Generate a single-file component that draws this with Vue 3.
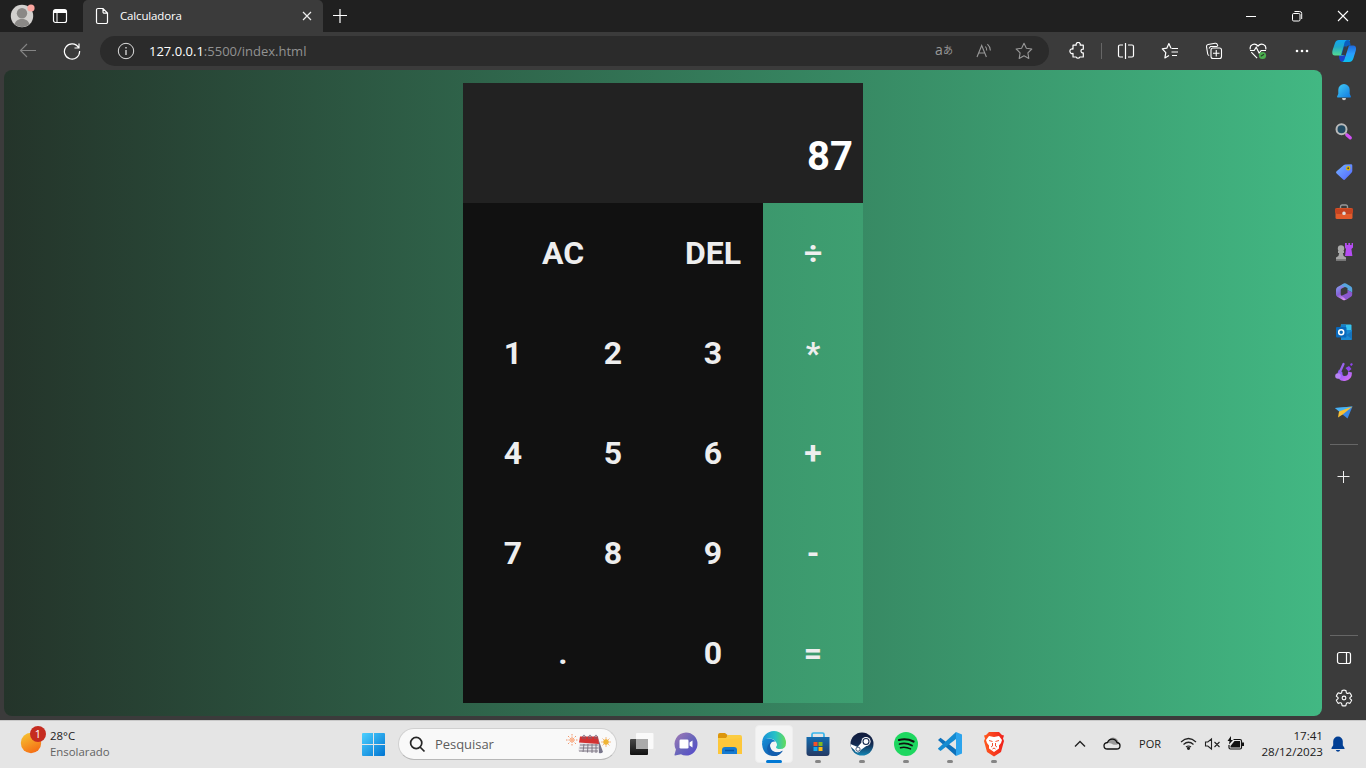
<script setup>
const keys = [
  { label: 'AC', wide: true }, { label: 'DEL' }, { label: '÷', op: true },
  { label: '1' }, { label: '2' }, { label: '3' }, { label: '*', op: true },
  { label: '4' }, { label: '5' }, { label: '6' }, { label: '+', op: true },
  { label: '7' }, { label: '8' }, { label: '9' }, { label: '-', op: true },
  { label: '.', wide: true }, { label: '0' }, { label: '=', op: true },
]
</script>

<template>
  <div class="screen">
    <header class="titlebar">
      <div class="cell avatar">
        <svg width="28" height="28" viewBox="0 0 28 28">
          <circle cx="14" cy="14" r="11.2" fill="#d2d0ce" />
          <circle cx="14" cy="11.2" r="5.2" fill="#8a8886" />
          <path d="M6.500 22.300c1-3.700 4-5.300 7.500-5.300s6.500 1.600 7.500 5.300a11.200 11.200 0 0 1-15 0z" fill="#8a8886" />
          <circle cx="23" cy="6" r="3.600" fill="#fca6a0" />
        </svg>
      </div>
      <div class="cell workspace">
        <svg width="16" height="16" viewBox="0 0 16 16" fill="none" stroke="#fff">
          <rect x="1.500" y="1.700" width="13" height="12.800" rx="2" stroke-width="1.200" />
          <path d="M1.500 4h13M2 2.800h12" stroke-width="1.800" /><path d="M5 4v10" />
        </svg>
      </div>
      <div class="tab">
        <svg class="file" width="14" height="18" viewBox="0 0 14 18" fill="none" stroke="#fff" stroke-width="1.200">
          <path d="M3 1.500h5l4.500 4.500v9a1.500 1.500 0 0 1-1.500 1.500H3A1.500 1.500 0 0 1 1.500 15V3A1.500 1.500 0 0 1 3 1.500zM8 1.500V5a1.200 1.200 0 0 0 1.200 1.200h3.300" />
        </svg>
        <span class="tab-title">Calculadora</span>
        <svg width="10" height="10" viewBox="0 0 10 10" stroke="#eee" stroke-width="1.200"><path d="M1 1l8 8M9 1L1 9" /></svg>
      </div>
      <div class="cell newtab"><svg width="16" height="16" viewBox="0 0 16 16" stroke="#fff" stroke-width="1.200"><path d="M8 1v14M1 7.500h14" /></svg></div>
      <div class="window-buttons">
        <div class="cell"><svg width="12" height="12" viewBox="0 0 12 12" stroke="#fff"><path d="M1 6.500h10" /></svg></div>
        <div class="cell"><svg width="12" height="12" viewBox="0 0 12 12" fill="none" stroke="#fff"><rect x="1.500" y="3.500" width="7.500" height="7.500" rx="1.200" /><path d="M3.500 1.500h5.200a2 2 0 0 1 2 2V9" /></svg></div>
        <div class="cell"><svg width="12" height="12" viewBox="0 0 12 12" stroke="#fff" stroke-width="1.100"><path d="M1 1l10 10M11 1L1 11" /></svg></div>
      </div>
    </header>

    <div class="toolbar">
      <div class="cell nav back"><svg width="18" height="18" viewBox="0 0 18 18" fill="none" stroke="#858585" stroke-width="1.100"><path d="M17 8.500H1.500M8 2L1.500 8.500 8 15" /></svg></div>
      <div class="cell nav"><svg width="18" height="18" viewBox="0 0 18 18" fill="none" stroke="#fff" stroke-width="1.200"><path d="M15.500 5.500A7.600 7.600 0 1 0 16.600 9M16 1.500v4.500h-4.500" /></svg></div>
      <div class="address">
        <svg class="info" width="18" height="18" viewBox="0 0 18 18" fill="none" stroke="#dedede"><circle cx="9" cy="9" r="7.700" /><path d="M9 8v5M9 5v1.400" stroke-width="1.300" /></svg>
        <span class="url"><b>127.0.0.1</b>:5500/index.html</span>
        <span class="cell tool translate">a<small>あ</small></span>
        <div class="cell tool"><svg width="18" height="18" viewBox="0 0 18 18" fill="none" stroke="#989898" stroke-width="1.100"><path d="M2 15L6.700 3.500 11.400 15M3.700 11h6M10.400 4.500q1.500 1.800 1.300 4M12.400 2.200q3 2.700 3 6.300" /></svg></div>
        <div class="cell tool"><svg width="18" height="18" viewBox="0 0 18 18" fill="none" stroke="#989898" stroke-width="1.100" stroke-linejoin="round"><path d="M9 1.200l2.400 5 5.400.8-3.900 3.900.9 5.500L9 13.800l-4.800 2.600.9-5.500L1.200 7l5.400-.8z" /></svg></div>
      </div>
      <div class="cell action extension">
        <svg width="18" height="18" viewBox="0 0 18 18" fill="none" stroke="#fff" stroke-width="1.200" stroke-linejoin="round"><path d="M5 3.200h3.200a2.100 2.100 0 1 1 4 0h3.100v4a1.900 1.900 0 1 0 0 3.700V15h-3.400a2.100 2.100 0 0 1-3.800 0H5v-3.600a2.300 2.300 0 1 1 0-4.300z" /></svg>
      </div>
      <i class="divider"></i>
      <div class="cell action"><svg width="18" height="18" viewBox="0 0 18 18" fill="none" stroke="#fff" stroke-width="1.200"><path d="M6 3H3a1.500 1.500 0 0 0-1.500 1.500v9A1.500 1.500 0 0 0 3 15h3M11 3h4a1.500 1.500 0 0 1 1.500 1.500v9A1.500 1.500 0 0 1 15 15h-4M8.500 1v16" /></svg></div>
      <div class="cell action"><svg width="18" height="18" viewBox="0 0 18 18" fill="none" stroke="#fff" stroke-width="1.200" stroke-linejoin="round"><path d="M10.200 6H9.900L7.900 1.500 5.800 6.200l-4.500.6 3.500 3.800-.9 5.300L8 13.600M10.500 6.500h6.500M10.500 10h6.500M11 13.500h5" /></svg></div>
      <div class="cell action"><svg width="18" height="18" viewBox="0 0 18 18" fill="none" stroke="#fff" stroke-width="1.100"><rect x="6" y="6" width="10.500" height="10.500" rx="2" /><path d="M11.250 8v6.500M8 11.250h6.500M4.200 13.500A2 2 0 0 1 2.700 12L1.500 4.700A2 2 0 0 1 3.100 2.500l7-1.200a2 2 0 0 1 2.300 1.500l.4 1.400M4 6.500l1.500-2h7" /></svg></div>
      <div class="cell action"><svg width="18" height="18" viewBox="0 0 18 18" fill="none" stroke="#fff" stroke-width="1.200"><path d="M1.300 7.300C.2 2.400 6 .5 9 4c3-3.500 8.800-1.600 7.700 3.300M2.300 10.200l5.800 6M1 8.500h4.200l2-3.300 3 6 2-2.700H17" /><circle cx="13.500" cy="13.500" r="3.600" fill="#4baf4f" stroke="none" /><path d="M11.800 14.200l3.200-2" stroke="#283c29" /></svg></div>
      <div class="cell action"><svg width="18" height="18" viewBox="0 0 18 18" fill="#fff"><circle cx="4" cy="9" r="1.300" /><circle cx="9" cy="9" r="1.300" /><circle cx="14" cy="9" r="1.300" /></svg></div>
      <div class="cell copilot">
        <svg width="24" height="24" viewBox="0 0 24 24">
          <defs>
            <linearGradient id="cop1" x2="0" y2="1"><stop stop-color="#10a7f2" /><stop offset=".45" stop-color="#22a9c8" /><stop offset="1" stop-color="#54dc91" /></linearGradient>
            <linearGradient id="cop2" x2="0" y2="1"><stop stop-color="#1e68da" /><stop offset=".5" stop-color="#299eff" /><stop offset="1" stop-color="#0abfed" /></linearGradient>
          </defs>
          <path d="M7 16h6v5q-1.500 2-3.500 1.700Q7.500 22 7 18z" fill="#1941c9" />
          <path d="M7 1h11l-3.500 6-3 9.500H3c-3 0-3.200-3-2.200-6L3 4C3.700 2 5 1 7 1z" fill="url(#cop1)" />
          <path d="M17 6.500h4.500c2.700 0 3 3 2 6l-2 6.500c-.8 2.600-2 4-4.500 4H9.500c2.700-.2 3-3 4-6z" fill="url(#cop2)" />
          <path d="M12 6q.6-5 4-5 2 0 2.600 5.500h-2.200q-1.700 0-2.200 2.500L12 16H9z" fill="#0a5ec0" />
          <path d="M12 7.500h2.800L12.500 16H9.700z" fill="#333d48" />
        </svg>
      </div>
    </div>

    <div class="browser-body">
      <main class="page">
        <section class="calculator">
          <div class="display">87</div>
          <div class="keypad">
            <button v-for="k in keys" :key="k.label" :class="{ wide: k.wide, op: k.op }">{{ k.label }}</button>
          </div>
        </section>
      </main>
      <aside class="sidebar">
        <div class="cell side"><svg width="18" height="20" viewBox="0 0 18 20"><defs><linearGradient id="bell" x2="1" y2="1"><stop stop-color="#43cdf6" /><stop offset="1" stop-color="#1078e0" /></linearGradient></defs><path d="M7 17h4q0 2.200-2 2.200T7 17z" fill="#ccc" /><path d="M9 3a5.700 5.700 0 0 0-5.700 5.700v4L2 15.800q0 .7.700.7h12.600q.7 0 .7-.7l-1.300-3.100v-4A5.700 5.700 0 0 0 9 3z" fill="url(#bell)" /></svg></div>
        <div class="cell side"><svg width="18" height="18" viewBox="0 0 18 18"><circle cx="6.500" cy="6.300" r="5" fill="#234b63" stroke="#b9b9b9" stroke-width="2" /><path d="M10.200 10l1.800 1.900" stroke="#aaa" stroke-width="2" /><path d="M12 12l3.200 2.800" stroke="#d050f4" stroke-width="3.400" stroke-linecap="round" /></svg></div>
        <div class="cell side"><svg width="18" height="18" viewBox="0 0 18 18"><defs><linearGradient id="tag" x2="1" y2="1"><stop stop-color="#75b4ff" /><stop offset="1" stop-color="#5264ff" /></linearGradient></defs><path d="M10.500 1.500l5.500-.2q1.300 0 1.300 1.300V8q0 .9-.8 1.700l-6.300 6.600q-1.100 1.200-2.300 0L1.600 10.500q-1.200-1.200 0-2.300l7-6q.9-.7 1.900-.7z" fill="url(#tag)" /><circle cx="13.200" cy="5.300" r="1.600" fill="#3b415c" stroke="#dfb600" stroke-width="1.300" /></svg></div>
        <div class="cell side"><svg width="20" height="18" viewBox="0 0 20 18"><path d="M6.500 6V3.800Q6.500 2 8 2h4q1.500 0 1.500 1.800V6" fill="none" stroke="#999" stroke-width="1.400" /><rect x="1.500" y="5" width="17" height="11" rx="1.500" fill="#e25b2b" /><path d="M1 5.500h18v4L17 11H3l-2-1.500z" fill="#c54421" /><rect x="8.300" y="8.500" width="3.400" height="3.600" rx="1.500" fill="#ddd" /></svg></div>
        <div class="cell side"><svg width="20" height="20" viewBox="0 0 20 20"><path d="M11 1h1.800v2h1.500V1h1.800v2h1.500V1H19v4.500L17.400 7l1 7H11l1-7-1-1.500z" fill="#b54df2" /><circle cx="7" cy="6.500" r="3.200" fill="#aaa" /><path d="M4 9h6v2H8.800l.8 3 2.400 1.500v3H2v-3L4.400 14l.8-3H4z" fill="#a7a7a7" /><path d="M2 17h10v1.500H2z" fill="#7d7d7d" /></svg></div>
        <div class="cell side"><svg width="18" height="20" viewBox="0 0 18 20"><defs><linearGradient id="office" x2=".5" y2="1"><stop stop-color="#89aef8" /><stop offset=".6" stop-color="#8460d4" /><stop offset="1" stop-color="#da8df3" /></linearGradient></defs><path d="M9 1.500L2.500 5Q1 6 1 7.700v4.800Q1 14 2.300 14.800L8 18q1 .6 2.200 0l4-2.500-7.500-1.700q-1-.3-1-1.200V8q0-1 1-1.500L12 4V2.800z" fill="url(#office)" /><path d="M9 1.500q1-.5 2 0l5 3q1.200.8 1.200 2.200v3.800L12.500 8V6L6 3.200z" fill="#56a5de" /><path d="M12.500 8l4.700 2.500v2q0 1.400-1.200 2.300l-5 3-4.300-4L12.500 11z" fill="#8b58cf" /></svg></div>
        <div class="cell side"><svg width="18" height="18" viewBox="0 0 18 18"><path d="M6 1.500h9.500q1 0 1 1v6H5z" fill="#35c3ef" /><path d="M6 1.500h5v4H6z" fill="#167fc9" /><path d="M6 7h11v9q0 1-1 1H6z" fill="#1888d3" /><path d="M11.500 12L17 8v8z" fill="#1573bd" /><rect x="1" y="4" width="10.500" height="10.500" rx="1" fill="#0969bc" /><circle cx="6.200" cy="9.200" r="2.500" fill="none" stroke="#fff" stroke-width="1.500" /></svg></div>
        <div class="cell side"><svg width="20" height="20" viewBox="0 0 20 20"><defs><linearGradient id="drop" x2="1" y2="1"><stop stop-color="#7254ff" /><stop offset="1" stop-color="#e273ed" /></linearGradient></defs><path d="M5 7.500Q2 13 4.500 16.500 7 19.500 11 19q7-1 7-8.500l-4-1q.5 4.500-3.500 4.500-2.500 0-2-3.500z" fill="url(#drop)" /><path d="M9.500 2L5 12" stroke="#9963ec" stroke-width="2.300" stroke-linecap="round" /><circle cx="4" cy="14" r="2.800" fill="#b783f5" /><path d="M11.500 6l3.500-2 2.500 3-3 2.500zM17 1l2 1-1.500 2-1.500-1z" fill="#8e44ed" /></svg></div>
        <div class="cell side"><svg width="20" height="18" viewBox="0 0 20 18"><path d="M1 5l17.500-1.500-5 12-5.200-4.300z" fill="#3887e5" /><path d="M1 5l17.500-1.500L6 9z" fill="#48b3f2" /><path d="M18.500 3.500L5 8.500l-1 6 5-3.200z" fill="#f7bf35" /></svg></div>
        <i class="rule"></i>
        <div class="cell add"><svg width="14" height="14" viewBox="0 0 14 14" stroke="#eee"><path d="M6.500 1v12M.5 6.500h12" /></svg></div>
        <i class="rule lower"></i>
        <div class="cell panel"><svg width="16" height="14" viewBox="0 0 16 14" fill="none" stroke="#fff" stroke-width="1.200"><rect x="1.500" y="1.500" width="13" height="11" rx="2" /><path d="M10.500 1.500v11" /></svg></div>
        <div class="cell settings"><svg width="18" height="18" viewBox="0 0 24 24" fill="none" stroke="#fff" stroke-width="1.500"><circle cx="12" cy="12" r="2.500" /><path d="M9.500 2q2.500-1 5 0l.6 2.600q.5 1.400 2 1.200l2.600-.7q1.700 1.800 2.500 4.300l-1.900 1.800q-1.100 1 0 2l1.900 1.700q-.8 2.500-2.500 4.300l-2.600-.8q-1.500-.2-2 1.200l-.6 2.600q-2.500.7-5 0l-.6-2.600q-.5-1.400-2-1.200l-2.600.8Q2.600 17.400 1.800 14.900l1.900-1.700q1.100-1 0-2L1.800 9.400q.8-2.500 2.500-4.300l2.600.7q1.500.2 2-1.200z" /></svg></div>
      </aside>
    </div>

    <footer class="taskbar">
      <div class="weather">
        <svg width="28" height="34" viewBox="0 0 28 34">
          <defs><linearGradient id="sun" x1=".2" x2=".7" y2="1"><stop stop-color="#f6c332" /><stop offset="1" stop-color="#f56b13" /></linearGradient></defs>
          <circle cx="12" cy="21" r="10.200" fill="url(#sun)" /><circle cx="19" cy="12" r="8" fill="#c52b20" /><text x="19" y="16" text-anchor="middle" fill="#fff">1</text>
        </svg>
        <div class="weather-text"><span>28°C</span><small>Ensolarado</small></div>
      </div>
      <div class="apps">
        <div class="cell start"><svg width="23" height="23" viewBox="0 0 23 23"><defs><linearGradient id="win" gradientUnits="userSpaceOnUse" x2="23" y2="23"><stop stop-color="#4dd0ff" /><stop offset="1" stop-color="#0074d1" /></linearGradient></defs><path d="M0 1q0-1 1-1h10v11H0zM12 0h10q1 0 1 1v10H12zM0 12h11v11H1q-1 0-1-1zM12 12h11v10q0 1-1 1H12z" fill="url(#win)" /></svg></div>
        <div class="search">
          <svg width="17" height="17" viewBox="0 0 17 17" fill="none" stroke="#262626" stroke-width="1.700"><circle cx="7.200" cy="7" r="5.600" /><path d="M11 11l4.500 4.500" /></svg>
          <span>Pesquisar</span>
          <svg class="event" width="46" height="24" viewBox="0 0 46 24">
            <path d="M6 2v12M0 8h12M2 4l8 8M10 4l-8 8" stroke="#f29568" stroke-width="1" stroke-dasharray="1.500 1" /><circle cx="6" cy="8" r="2" fill="#fcb58f" />
            <path d="M32 6l5 14q-2 2-4 1z" fill="#77758a" /><path d="M14 9l-2 10q10 2.500 21 2L32 9z" fill="#e7e5ea" /><path d="M14 4.500h18l1 7.500-20-1.500z" fill="#d23232" />
            <path d="M14 13h18M13.500 16h19M13 19h19M18 12l-1 8M22 12l-.5 8.500M26 12v9M30 12v9" stroke="#77717e" stroke-width=".9" /><path d="M17 7q-1-4 1-4t1 4M23 7q-1-4 1-4t1 4M29 7q-1-4 1-4t1 4" fill="none" stroke="#71687d" stroke-width=".8" />
            <path d="M40 5v10M35 10h10M36.500 6.500l7 7M43.500 6.500l-7 7" stroke="#f1b27b" stroke-width=".9" /><circle cx="40" cy="10" r="2.700" fill="#f0b535" />
          </svg>
        </div>
        <div class="cell app"><svg width="26" height="24" viewBox="0 0 26 24"><defs><linearGradient id="dark" y2="1" x2="0"><stop stop-color="#494949" /><stop offset="1" stop-color="#111" /></linearGradient></defs><rect x="1" y="7" width="18" height="16" rx="1" fill="url(#dark)" /><rect x="7" y="1" width="17.500" height="16" rx="1" fill="#fafafa" /><path d="M7 7h12v10H7z" fill="#aaa" /></svg></div>
        <div class="cell app"><svg width="26" height="26" viewBox="0 0 26 26"><defs><linearGradient id="chat" x2="1" y2="1"><stop stop-color="#a37bb5" /><stop offset=".55" stop-color="#6664bb" /><stop offset="1" stop-color="#5547ce" /></linearGradient></defs><path d="M13 1.500A11.500 11.500 0 0 1 13 24.500q-3 0-5-1.200L2 24.500q-.8 0-.5-.8l1.400-5.200A11.500 11.500 0 0 1 13 1.500z" fill="url(#chat)" /><rect x="6.500" y="8.500" width="9" height="9" rx="1.300" fill="#fff" /><path d="M16.500 11.500l3-2v7l-3-2z" fill="#fff" /></svg></div>
        <div class="cell app"><svg width="26" height="26" viewBox="0 0 26 26"><path d="M1 4q0-2 2-2h5l2.500 2v7H1z" fill="#dc960c" /><path d="M1 7h8l2-3h12q2 0 2 2v17H1z" fill="#fbcc42" /><path d="M1 9l24-2v16H1z" fill="#fdc73b" /><path d="M5 23v-4q0-3 3-3h9q3 0 3 3v4z" fill="#167bd1" /><path d="M8 19.500h9" stroke="#0754a3" stroke-width="1.500" /></svg></div>
        <div class="cell app active"><svg width="26" height="26" viewBox="0 0 26 26">
          <defs><linearGradient id="edge1" x2="1"><stop stop-color="#198fd9" /><stop offset=".55" stop-color="#28c1c7" /><stop offset="1" stop-color="#64dc58" /></linearGradient><linearGradient id="edge2" x2="1" y2="1"><stop stop-color="#168fd9" /><stop offset="1" stop-color="#114fa0" /></linearGradient></defs>
          <path d="M1 12A12 12 0 0 1 25 12q0 6-6 6-4 0-4-2 2-2 0-5-3-4-8-3.400-4 .6-6 4.400z" fill="url(#edge1)" /><path d="M1 13q0-5.600 6-5.600 5 0 7.500 3.100-4.500-.5-5.500 3-.5 6 5 7.500 4.500 1.200 8-1.500Q18 25 13 25 2 25 1 13z" fill="url(#edge2)" /><path d="M13 10q-4 1-4 5 .3 5 5.500 6.300 3.500.7 7.200-1.500Q18.500 25 13 25q-6-1-7-7 .3-6 7-8z" fill="#125eaf" />
        </svg></div>
        <div class="cell app running"><svg width="26" height="26" viewBox="0 0 26 26"><defs><linearGradient id="store" x2="0" y2="1"><stop stop-color="#146caf" /><stop offset="1" stop-color="#243963" /></linearGradient></defs><path d="M7 7V3.500Q7 2 8.500 2h9Q19 2 19 3.500V7" stroke="#37b5ec" stroke-width="1.700" fill="none" /><path d="M1.500 6h23v16q0 3-3 3h-17q-3 0-3-3z" fill="url(#store)" /><path d="M8.500 11h4v4h-4z" fill="#f35128" /><path d="M13.500 11h4v4h-4z" fill="#80ba20" /><path d="M8.500 16h4v4h-4z" fill="#12a8ee" /><path d="M13.500 16h4v4h-4z" fill="#ffbb14" /></svg></div>
        <div class="cell app running"><svg width="26" height="26" viewBox="0 0 26 26"><defs><linearGradient id="steam" x2="0" y2="1"><stop stop-color="#111b3c" /><stop offset=".5" stop-color="#152a50" /><stop offset="1" stop-color="#1486b5" /></linearGradient></defs><circle cx="13" cy="13" r="11.500" fill="url(#steam)" /><path d="M1.500 13l7 3 4.500-5 5 3.500-6.200 4.500q-1 3-4 2.300-1.800-.5-2.300-2.300L2 16z" fill="#fff" /><circle cx="17" cy="10.500" r="4.600" fill="#fff" /><circle cx="17" cy="10.500" r="3" fill="#fff" stroke="#172b50" stroke-width="1.100" /><circle cx="9" cy="18.200" r="2.100" fill="#fff" stroke="#18345c" stroke-width=".8" /></svg></div>
        <div class="cell app running"><svg width="26" height="26" viewBox="0 0 26 26"><circle cx="13" cy="13" r="12" fill="#1ed760" /><g fill="none" stroke="#101010" stroke-linecap="round"><path d="M6 9q7.500-2 14.500 1.500" stroke-width="2.200" /><path d="M6.500 13q6.500-1.800 12.500 1.500" stroke-width="1.800" /><path d="M7.500 16.700q5-1.200 10 1.200" stroke-width="1.500" /></g></svg></div>
        <div class="cell app running"><svg width="26" height="26" viewBox="0 0 26 26"><path d="M1 9l2.500-2.200L19 18.500V25z" fill="#0d70ba" /><path d="M1 17.500L19 1v7L3.500 20 1 18z" fill="#158bd1" /><path d="M19 1l6 2.500v19L19 25z" fill="#2ca4ed" /></svg></div>
        <div class="cell app running"><svg width="24" height="26" viewBox="0 0 24 26"><defs><linearGradient id="brave" x2="1"><stop stop-color="#ff5a1f" /><stop offset="1" stop-color="#f0201c" /></linearGradient></defs><path d="M7 1h10l3 3 2 .6-1 3 1 2.400-3 11-7 4.500L5 21 2 10l1-2.400-1-3L4 4z" fill="url(#brave)" /><path d="M7 5l5 1 5-1 3 4-1 3-2 2.500v3L12 21l-5-3.500v-3L5 12 4 9z" fill="#fff" /><path d="M7 9.500l3.500 1M17 9.500l-3.500 1M10.500 12v3l-1.500 1M13.500 12v3l1.500 1M10.500 18l1.500-1 1.500 1" fill="none" stroke="#f33c1a" stroke-width=".9" /></svg></div>
      </div>
      <div class="tray">
        <div class="cell chevron"><svg width="12" height="8" viewBox="0 0 12 8" fill="none" stroke="#222" stroke-width="1.400"><path d="M1 6.500l5-5 5 5" /></svg></div>
        <div class="cell cloud"><svg width="18" height="14" viewBox="0 0 18 14"><path d="M4.500 5.500a5 5 0 0 1 9.500 0q3 .4 3 3.200 0 3.300-3.500 3.300h-9Q1 12 1 8.700 1 6 4.500 5.500z" fill="#e5e5e5" /><path d="M3.500 6.200q4-1 6.500 1.200 2 1 5.500-.5A5 5 0 0 0 5 5z" fill="#999" /><path d="M4.500 5.500a5 5 0 0 1 9.500 0q3 .4 3 3.200 0 3.300-3.500 3.300h-9Q1 12 1 8.700 1 6 4.500 5.500z" fill="none" stroke="#111" stroke-width="1.300" /></svg></div>
        <span class="lang">POR</span>
        <div class="cell wifi"><svg width="17" height="14" viewBox="0 0 17 14" fill="none" stroke="#222" stroke-width="1.200"><path d="M1 5q7.500-7 15 0M3.500 7.500q5-4.500 10 0M6 10q2.500-2 5 0" /><circle cx="8.500" cy="11.300" r="1" fill="#222" /></svg></div>
        <div class="cell mute"><svg width="17" height="14" viewBox="0 0 17 14" fill="none" stroke="#222" stroke-width="1.100"><path d="M1.500 5h2.300L7.500 2v10L3.800 9H1.500zM10.500 5l5 5M15.500 5l-5 5" /></svg></div>
        <div class="cell battery"><svg width="18" height="16" viewBox="0 0 18 16"><path d="M6.500 3.500h6.500q1.500 0 1.500 1.500v6.500q0 1.500-1.500 1.500H3.500Q2 13 2 11.500V9" fill="none" stroke="#111" stroke-width="1.200" /><path d="M7.500 5h5.500v6.500H3.500V10zM15 6.500h2v3.500h-2zM4 0L.5 5h2L2 8.500 6 4H4z" fill="#111" /></svg></div>
        <div class="clock"><span>17:41</span><span>28/12/2023</span></div>
        <svg class="notice" width="14" height="16" viewBox="0 0 14 16"><path d="M7 .5a4.800 4.800 0 0 0-4.800 4.800v3.900L.5 12v1h13v-1l-1.700-2.800V5.300A4.800 4.800 0 0 0 7 .5zM4.800 14h4.400Q8.600 15.700 7 15.700T4.800 14z" fill="#023f94" /></svg>
      </div>
    </footer>
  </div>
</template>

<style>
body { margin: 0; overflow: hidden; }
</style>

<style scoped>
.screen { width: 1366px; height: 768px; overflow: hidden; display: flex; flex-direction: column; background: #3b3b3b; font-family: "Open Sans", "Noto Sans", sans-serif; }
.screen * { box-sizing: border-box; }
svg { display: block; flex: none; }
.cell { display: flex; align-items: center; justify-content: center; flex: none; }
.titlebar { height: 32px; display: flex; background: #202020; }
.avatar { width: 44px; }
.workspace { width: 32px; }
.tab { width: 240px; margin-left: 7px; display: flex; align-items: center; background: #3b3b3b; border-radius: 5px 5px 0 0; padding: 0 11px 0 12px; }
.tab-title { flex: 1; margin: 0 0 2px 11px; color: #fff; font-size: 11.5px; letter-spacing: -.15px; }
.newtab { width: 34px; }
.window-buttons { margin-left: auto; display: flex; }
.window-buttons .cell { width: 46px; }
.toolbar { height: 38px; display: flex; align-items: center; }
.nav { width: 44px; }
.back { margin-left: 6px; }
.address { height: 30px; width: 949px; margin-left: 6px; border-radius: 15px; background: #2b2b2b; display: flex; align-items: center; padding: 0 5px 0 17px; }
.url { flex: 1; margin-left: 14px; color: #929292; font-size: 13px; }
.url b { color: #fff; font-weight: 400; }
.tool { width: 40px; }
.translate { font: 14px/16px "Open Sans", sans-serif; color: #989898; padding-bottom: 2px; }
.translate small { font: 10px/16px "Noto Sans CJK JP", sans-serif; }
.action { width: 44px; }
.extension { margin-left: 6px; }
.divider { width: 1px; height: 16px; margin: 0 2px 0 2px; background: #666; }
.copilot { width: 40px; }
.browser-body { height: 650px; display: flex; padding: 0 0 4px 4px; }
.page { width: 1318px; height: 646px; display: flex; align-items: center; justify-content: center; border-radius: 8px; background: linear-gradient(to right, #24342a, #42b883); }
.calculator { width: 400px; height: 620px; font-family: Roboto, sans-serif; font-weight: 700; }
.display { height: 120px; background: #222; color: #fff; font-size: 40px; text-align: right; padding: 50px 10px 0 0; line-height: 47px; }
.keypad { height: 500px; display: grid; grid-template-columns: repeat(4, 100px); grid-auto-rows: 100px; background: linear-gradient(to right, #111 300px, #3c986d 300px, #3e9f71); }
.keypad button { border: 0; padding: 0; background: none; color: #eee; font: 700 32px Roboto, sans-serif; }
.keypad .wide { grid-column: span 2; }
.keypad .op { color: #eee; }
.sidebar { width: 44px; display: flex; flex-direction: column; align-items: center; }
.side { height: 40px; width: 40px; flex: none; }
.side:first-child { height: 42px; }
.rule { width: 28px; height: 1px; background: #666; margin-top: 12px; flex: none; }
.add { height: 64px; }
.lower { margin-top: 126px; }
.panel { height: 44px; }
.settings { height: 36px; }
.taskbar { height: 48px; border-top: 1px solid #c9c9c9; background: #e5e5e5; display: flex; color: #202020; }
.weather { width: 354px; display: flex; padding: 1px 0 0 19px; }
.weather svg text { font-size: 11px; }
.weather-text { display: flex; flex-direction: column; margin: 6px 0 0 3px; font-size: 11.4px; line-height: 16px; }
.weather-text small { font-size: 11.4px; color: #626262; }
.apps { display: flex; align-items: center; padding-bottom: 1px; }
.start { width: 39px; }
.search { width: 219px; height: 32px; margin: 0 3px 0 5px; border: 1px solid #d0d0d0; border-bottom-color: #b8b8b8; border-radius: 16px; background: #f9f9f9; display: flex; align-items: center; padding: 0 4px 0 10px; font-size: 13px; color: #5d5d5d; }
.search span { margin: 0 0 1px 9px; letter-spacing: -.04px; }
.event { margin-left: auto; }
.app { width: 38px; height: 38px; margin: 0 3px; position: relative; border-radius: 4px; }
.active { background: #f4f4f4; border: 1px solid #eee; }
.running::after, .active::after { content: ""; position: absolute; bottom: 0; width: 6px; height: 3px; border-radius: 2px; background: #858585; }
.active::after { width: 16px; bottom: -1px; background: #0078d4; }
.tray { margin-left: auto; width: 306px; display: flex; align-items: center; padding-bottom: 2px; }
.chevron { width: 40px; }
.cloud { width: 24px; }
.lang { width: 52px; text-align: center; font-size: 11px; }
.wifi, .mute, .battery { width: 24px; }
.clock { width: 75px; display: flex; flex-direction: column; text-align: right; font-size: 11.6px; line-height: 16px; margin-right: 8px; }
</style>
